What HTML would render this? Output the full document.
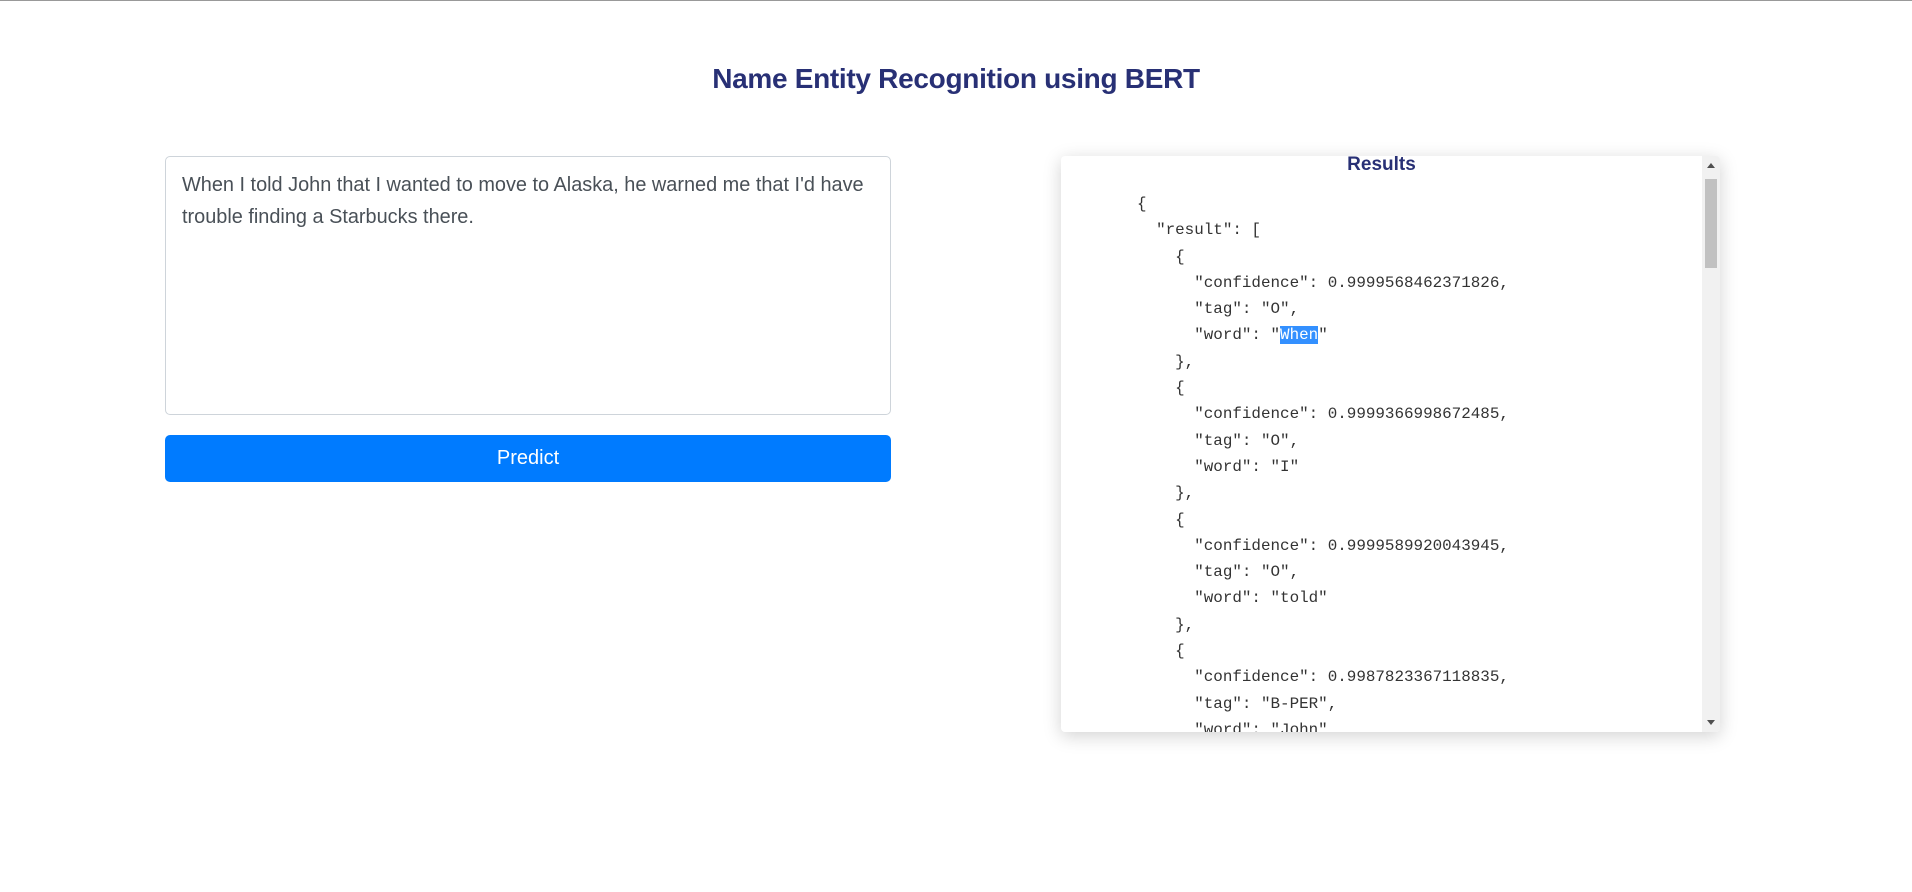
<!DOCTYPE html>
<html><head><meta charset="utf-8">
<style>
html,body{margin:0;padding:0;width:1912px;height:892px;overflow:hidden;background:#fff;font-family:"Liberation Sans",sans-serif;}
.topline{position:absolute;left:0;top:0;width:1912px;height:1px;background:#999;}
h1{position:absolute;left:0;width:1912px;top:63px;margin:0;text-align:center;font-size:28px;font-weight:bold;color:#283075;letter-spacing:-0.3px;}
.ta{position:absolute;left:165px;top:156px;width:726px;height:259px;border:1px solid #ced4da;border-radius:5px;box-sizing:border-box;padding:12px 16px;font-size:19.9px;line-height:32px;color:#495057;}
.btn{position:absolute;left:165px;top:435px;width:726px;height:47px;background:#007bff;border-radius:5px;color:#fff;font-size:20px;text-align:center;line-height:47px;}
.panel{position:absolute;left:1061px;top:156px;width:659px;height:576px;background:#fff;box-shadow:0 4px 18px rgba(0,0,0,0.18);border-radius:4px;overflow:hidden;}
.res{position:absolute;left:0;width:641px;top:-2px;text-align:center;font-size:19px;font-weight:bold;color:#283075;}
pre{position:absolute;left:76px;top:35px;margin:0;font-family:"Liberation Mono","DejaVu Sans Mono",monospace;font-size:15.9px;line-height:26.3px;color:#333;}
.sel{background:#3390ff;color:#fff;}
.sb{position:absolute;right:0;top:0;width:18px;height:576px;background:#f1f1f1;}
.thumb{position:absolute;right:3px;top:23px;width:12px;height:89px;background:#c1c1c1;}
.up,.dn{position:absolute;right:5px;width:0;height:0;border-left:4px solid transparent;border-right:4px solid transparent;}
.up{top:7px;border-bottom:5px solid #505050;}
.dn{bottom:7px;border-top:5px solid #505050;}
</style></head><body>
<div class="topline"></div>
<h1>Name Entity Recognition using BERT</h1>
<div class="ta">When I told John that I wanted to move to Alaska, he warned me that I'd have trouble finding a Starbucks there.</div>
<div class="btn">Predict</div>
<div class="panel">
<div class="res">Results</div>
<pre>{
  "result": [
    {
      "confidence": 0.9999568462371826,
      "tag": "O",
      "word": "<span class="sel">When</span>"
    },
    {
      "confidence": 0.9999366998672485,
      "tag": "O",
      "word": "I"
    },
    {
      "confidence": 0.9999589920043945,
      "tag": "O",
      "word": "told"
    },
    {
      "confidence": 0.9987823367118835,
      "tag": "B-PER",
      "word": "John"
    },</pre>
<div class="sb"><div class="up"></div><div class="thumb"></div><div class="dn"></div></div>
</div>
</body></html>
